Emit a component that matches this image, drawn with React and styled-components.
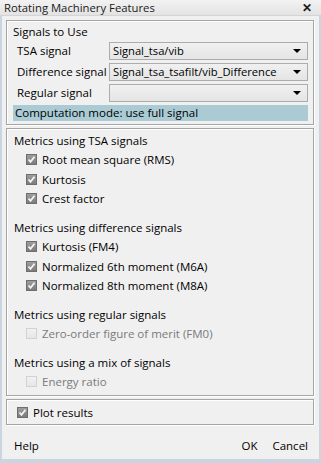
import styled, { createGlobalStyle } from 'styled-components';

const GlobalStyle = createGlobalStyle`
  html, body {
    margin: 0;
    padding: 0;
    background: #f0f0f0;
  }
  * {
    box-sizing: border-box;
  }
`;

const Window = styled.div`
  width: 321px;
  height: 463px;
  display: flex;
  flex-direction: column;
  background: #f0f0f0;
  font-family: "Open Sans", "Noto Sans", sans-serif;
  font-size: 11.5px;
  color: #000;
  border-left: 2px solid #c9d5e1;
  border-right: 2px solid #c9d5e1;
  border-bottom: 4px solid #c9d5e1;
`;

const TitleBar = styled.div`
  height: 17px;
  margin: 0 -2px;
  display: flex;
  align-items: center;
  justify-content: space-between;
  padding: 0 9px 0 4px;
  background: linear-gradient(#f2f2f2, #e3e3e3);
  border-bottom: 1px solid #d4d4d4;
  font-size: 11.3px;
  color: #1a1a1a;
`;

const Close = styled.span`
  font-size: 12px;
  font-weight: bold;
  line-height: 1;
`;

const Body = styled.div`
  flex: 1;
  display: flex;
  flex-direction: column;
  gap: 3px;
  padding: 4px 5px 0 4px;
`;

const Panel = styled.div`
  border: 1px solid #a5a5a5;
  box-shadow: inset 1px 1px 0 #fff, 1px 1px 0 #fff;
  padding: ${(p) => p.$pad || '2px 6px 3px 7px'};
`;

const Heading = styled.div`
  height: 19.5px;
  line-height: 19.5px;
  margin-top: ${(p) => (p.$first ? '0' : '9px')};
`;

const SignalRow = styled.div`
  display: flex;
  align-items: center;
  height: 18px;
  margin-bottom: 3px;
  padding-left: 4px;
`;

const SignalLabel = styled.span`
  width: 92px;
  white-space: nowrap;
`;

const Combo = styled.div`
  flex: 1;
  height: 18px;
  display: flex;
  align-items: center;
  justify-content: space-between;
  padding: 0 6px 0 3px;
  border: 1px solid #acacac;
  background: linear-gradient(#f0f0f0, #e5e5e5);
  white-space: nowrap;
  font-size: 11.2px;
`;

const Arrow = styled.span`
  width: 0;
  height: 0;
  border-left: 4px solid transparent;
  border-right: 4px solid transparent;
  border-top: 4px solid #000;
`;

const ModeBar = styled.div`
  height: 16px;
  line-height: 16px;
  margin-top: 1px;
  padding-left: 2px;
  background: #aacad4;
  white-space: nowrap;
`;

const CheckRow = styled.label`
  display: flex;
  align-items: center;
  gap: 5px;
  height: 19.5px;
  padding-left: ${(p) => p.$indent || '12px'};
  color: ${(p) => (p.$disabled ? '#7a7a7a' : '#000')};
`;

const Box = styled.span`
  width: 11px;
  height: 11px;
  flex: none;
  display: flex;
  align-items: center;
  justify-content: center;
  border: 1px solid ${(p) => (p.$checked ? '#6e6e6e' : '#d2d2d2')};
  background: ${(p) =>
    p.$checked ? 'linear-gradient(#9d9d9d, #7c7c7c)' : 'linear-gradient(#f2f2f2, #e6e6e6)'};
`;

const Footer = styled.div`
  display: flex;
  align-items: center;
  justify-content: space-between;
  padding: 0 6px 0 8px;
  height: 35px;
`;

const Buttons = styled.div`
  display: flex;
  gap: 15px;
`;

function Check({ checked }) {
  return (
    <Box $checked={checked}>
      {checked && (
        <svg width="9" height="9" viewBox="0 0 9 9">
          <path d="M1.5 4.5 L3.5 6.8 L7.5 1.8" fill="none" stroke="#f4f4f4" strokeWidth="1.8" />
        </svg>
      )}
    </Box>
  );
}

function Item({ label, checked = true, disabled, indent }) {
  return (
    <CheckRow $disabled={disabled} $indent={indent}>
      <Check checked={checked} />
      <span>{label}</span>
    </CheckRow>
  );
}

const groups = [
  {
    title: 'Metrics using TSA signals',
    items: [{ label: 'Root mean square (RMS)' }, { label: 'Kurtosis' }, { label: 'Crest factor' }],
  },
  {
    title: 'Metrics using difference signals',
    items: [
      { label: 'Kurtosis (FM4)' },
      { label: 'Normalized 6th moment (M6A)' },
      { label: 'Normalized 8th moment (M8A)' },
    ],
  },
  {
    title: 'Metrics using regular signals',
    items: [{ label: 'Zero-order figure of merit (FM0)', checked: false, disabled: true }],
  },
  {
    title: 'Metrics using a mix of signals',
    items: [{ label: 'Energy ratio', checked: false, disabled: true }],
  },
];

const signals = [
  ['TSA signal', 'Signal_tsa/vib'],
  ['Difference signal', 'Signal_tsa_tsafilt/vib_Difference'],
  ['Regular signal', ''],
];

export default function App() {
  return (
    <>
      <GlobalStyle />
      <Window>
        <TitleBar>
          <span>Rotating Machinery Features</span>
          <Close>✕</Close>
        </TitleBar>
        <Body>
          <Panel $pad="1px 5px 3px 6px">
            <Heading $first>Signals to Use</Heading>
            {signals.map(([label, value]) => (
              <SignalRow key={label}>
                <SignalLabel>{label}</SignalLabel>
                <Combo>
                  <span>{value}</span>
                  <Arrow />
                </Combo>
              </SignalRow>
            ))}
            <ModeBar>Computation mode: use full signal</ModeBar>
          </Panel>
          <Panel>
            {groups.map((g, i) => (
              <div key={g.title}>
                <Heading $first={i === 0}>{g.title}</Heading>
                {g.items.map((it) => (
                  <Item key={it.label} {...it} />
                ))}
              </div>
            ))}
          </Panel>
          <Panel $pad="3px 6px 2px 4px">
            <Item label="Plot results" indent="6px" />
          </Panel>
          <Footer>
            <span>Help</span>
            <Buttons>
              <span>OK</span>
              <span>Cancel</span>
            </Buttons>
          </Footer>
        </Body>
      </Window>
    </>
  );
}
